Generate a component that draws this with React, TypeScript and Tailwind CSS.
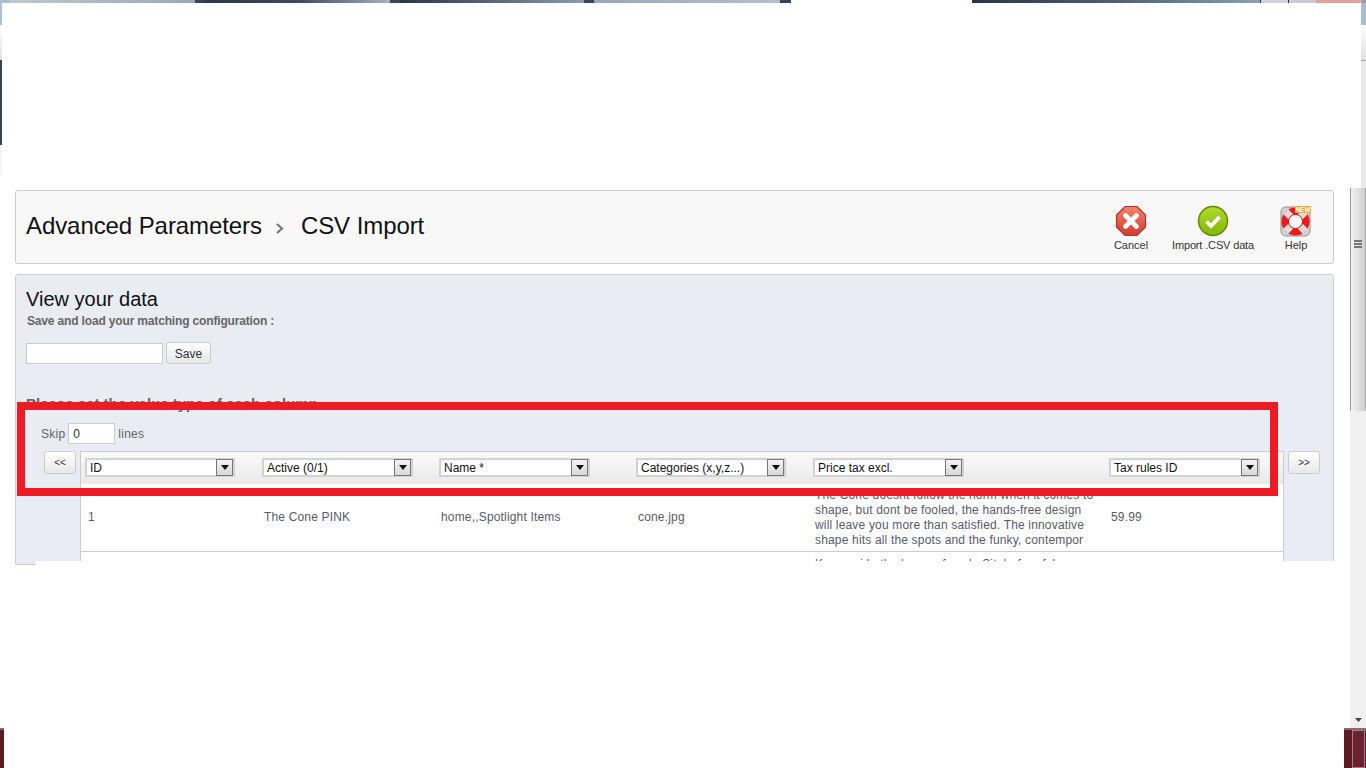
const selects = [
  { label: 'ID', width: 'w-[150px]' },
  { label: 'Active (0/1)', width: 'w-[151px]' },
  { label: 'Name *', width: 'w-[151px]' },
  { label: 'Categories (x,y,z...)', width: 'w-[150px]' },
  { label: 'Price tax excl.', width: 'w-[151px]' },
  { label: 'Tax rules ID', width: 'w-[151px]' },
];

const firstRow = ['1', 'The Cone PINK', 'home,,Spotlight Items', 'cone.jpg'];

const description = [
  'The Cone doesnt follow the norm when it comes to',
  'shape, but dont be fooled, the hands-free design',
  'will leave you more than satisfied. The innovative',
  'shape hits all the spots and the funky, contempor',
];

const columns = 'grid grid-cols-[177px_177px_197px_177px_296px_178px]';

const CancelIcon = () => (
  <svg width="32" height="32" viewBox="0 0 32 32">
    <defs>
      <linearGradient id="cancelFill" x1="0" y1="0" x2="0" y2="1">
        <stop offset="0" stopColor="#f4826c" />
        <stop offset="1" stopColor="#d63a2a" />
      </linearGradient>
    </defs>
    <path d="M10 1.5h12l8.500 8.500v12l-8.500 8.500h-12l-8.500-8.500v-12z" fill="url(#cancelFill)" stroke="#a8392c" strokeWidth="1.200" />
    <path d="M10.500 10.500l11 11M21.500 10.500l-11 11" stroke="#fff" strokeWidth="4.800" strokeLinecap="round" />
  </svg>
);

const ImportIcon = () => (
  <svg width="32" height="32" viewBox="0 0 32 32">
    <defs>
      <linearGradient id="importFill" x1="0" y1="0" x2="0" y2="1">
        <stop offset="0" stopColor="#b2d832" />
        <stop offset="1" stopColor="#82b800" />
      </linearGradient>
    </defs>
    <circle cx="16" cy="16" r="14.500" fill="url(#importFill)" stroke="#5f8a08" strokeWidth="1.400" />
    <path d="M9.500 16.500l4.500 4.500 8.500-9" fill="none" stroke="#fff" strokeWidth="3.800" />
  </svg>
);

const HelpIcon = () => (
  <svg width="34" height="32" viewBox="0 0 34 32">
    <rect x="2" y="2" width="29" height="29" rx="5" fill="#d4d4d4" stroke="#8f8f8f" />
    <circle cx="16.500" cy="16.500" r="14" fill="#f01818" />
    <path d="M6.500 6.500l6 6M26.500 6.500l-6 6M6.500 26.500l6-6M26.500 26.500l-6-6" stroke="#dcdcdc" strokeWidth="7" />
    <circle cx="16.500" cy="16.500" r="7" fill="#fff" stroke="#b01414" />
    <rect x="16" y="1" width="16" height="7" rx="1" fill="#f5a623" />
    <text x="24" y="7" textAnchor="middle" fontSize="6.500" fontWeight="700" fill="#fff" fontFamily="Liberation Sans, sans-serif">NEW</text>
  </svg>
);

const FakeSelect = ({ label, width }: { label: string; width: string }) => (
  <div className={`${width} h-[19px] flex items-center justify-between bg-white border-2 border-[#d2d2d2] text-xs text-[#111] pl-[3px]`}>
    <span>{label}</span>
    <span className="w-[17px] h-[17px] flex items-center justify-center border border-[#777] bg-gradient-to-b from-[#f4f4f4] to-[#d8d8d8]">
      <svg width="8" height="5" viewBox="0 0 8 5">
        <path d="M0 0h8l-4 5z" fill="#111" />
      </svg>
    </span>
  </div>
);

const ScrollButton = ({ label }: { label: string }) => (
  <button className="w-8 h-[23px] shrink-0 border border-[#ccc] rounded-[3px] bg-gradient-to-b from-white to-[#e8e8e8] text-[10px] leading-[16px] text-[#333]">
    {label}
  </button>
);

const App = () => {
  return (
    <div className="relative w-[1366px] h-[768px] overflow-hidden flex flex-col bg-white font-['Liberation_Sans',Arial,sans-serif]">
      {/* window title bar behind the cut-out */}
      <div className="h-[3px] shrink-0 flex bg-[#3a4558]">
        <div className="w-[10px] bg-[#a9bdd2]" />
        <div className="w-[185px] bg-gradient-to-r from-[#c0c8d0] to-[#98a8bc]" />
        <div className="w-[10px]" />
        <div className="w-[185px] bg-gradient-to-r from-[#2d3648] via-[#3f4a5e] to-[#a8b4c4]" />
        <div className="w-[10px]" />
        <div className="w-[184px] bg-gradient-to-r from-[#2d3648] to-[#8d9cb0]" />
        <div className="w-[10px]" />
        <div className="w-[186px] bg-gradient-to-r from-[#98a8bc] to-[#b4c0cc]" />
        <div className="w-[11px]" />
        <div className="w-[181px] bg-white" />
        <div className="w-[288px] bg-gradient-to-r from-[#2b3347] via-[#4f6078] to-[#8ba0b8]" />
        <div className="w-[28px] bg-[#cfd2da] border-l border-[#333]" />
        <div className="w-[28px] bg-[#c9ccd6] border-l border-[#333]" />
        <div className="w-[46px] bg-[#eb9f96]" />
        <div className="flex-1 bg-[#8ba0b8]" />
      </div>

      <div className="h-[725px] shrink-0 flex">
        {/* sliver of the browser on the left */}
        <div className="w-[2px] h-[172px] shrink-0 flex flex-col">
          <div className="h-[22px] bg-[#a9c0d8]" />
          <div className="h-[35px] bg-gradient-to-b from-white to-[#e0e0e0]" />
          <div className="h-[85px] bg-[#3a4250]" />
          <div className="h-[30px] bg-[#f4f4f4]" />
        </div>

        <div className="w-[1348px] shrink-0 pl-[13px] pr-[16px] pt-[187px]">
          <div className="h-[74px] flex items-center justify-between bg-[#f8f8f8] border border-[#ccc] rounded-[3px] pl-[10px]">
            <div className="flex items-center text-2xl tracking-[-0.08px] text-[#111] pb-[3px]">
              <span>Advanced Parameters</span>
              <svg className="ml-[14px] mr-[17px] mt-[5px]" width="8" height="11" viewBox="0 0 8 11">
                <path d="M1 1l5 4.500-5 4.500" fill="none" stroke="#777" strokeWidth="2.200" />
              </svg>
              <span>CSV Import</span>
            </div>
            <div className="flex text-[11px] text-[#333] h-full pt-[14px]">
              <div className="w-[34px] flex flex-col items-center mr-[24px]">
                <CancelIcon />
                <span className="whitespace-nowrap">Cancel</span>
              </div>
              <div className="w-[82px] flex flex-col items-center mr-[25px]">
                <ImportIcon />
                <span className="whitespace-nowrap tracking-[-0.15px]">Import .CSV data</span>
              </div>
              <div className="w-[34px] flex flex-col items-center mr-[20px]">
                <HelpIcon />
                <span className="whitespace-nowrap">Help</span>
              </div>
            </div>
          </div>

          <div className="h-[291px] mt-[10px] overflow-hidden bg-[#e9ecf3] border border-[#ccced7] rounded-t-[3px] pl-[10px]">
            <h2 className="mt-[13px] text-xl leading-[22px] text-[#111]">View your data</h2>
            <p className="mt-[4px] pl-[1px] text-xs leading-[14px] font-bold tracking-[-0.16px] text-[#666]">Save and load your matching configuration :</p>
            <div className="mt-[14px] flex items-start gap-[3px]">
              <div className="w-[137px] h-[21px] mt-[1px] bg-white border border-[#ccc]" />
              <button className="w-[45px] h-[22px] pt-[1px] border border-[#ccc] rounded-[3px] bg-gradient-to-b from-white to-[#e6e6e6] text-xs text-[#333]">
                Save
              </button>
            </div>
            <p className="mt-[32px] text-[15px] leading-4 font-bold text-[#666]">Please set the value type of each column</p>

            <div className="mt-[11px] ml-[15px] flex items-center text-xs tracking-[0.25px] text-[#666]">
              <span>Skip</span>
              <div className="w-[47px] h-[21px] ml-[3px] mr-[3px] pl-[4px] leading-[20px] bg-white border border-[#ccc] text-[#333]">0</div>
              <span>lines</span>
            </div>

            <div className="mt-[7px] ml-[18px] flex items-start gap-[4px]">
              <ScrollButton label="<<" />
              <div className="w-[1204px] border border-[#ccc] border-b-0 bg-white">
                <div className={`${columns} h-[32px] items-center bg-gradient-to-b from-[#fafafa] to-[#e9e9e9]`}>
                  {selects.map((select) => (
                    <div key={select.label} className="pl-[4px] pb-[1px]">
                      <FakeSelect label={select.label} width={select.width} />
                    </div>
                  ))}
                </div>
                <div className={`${columns} h-[68px] items-center border-b border-[#ccc] text-xs leading-[15px] tracking-[0.17px] text-[#585a69]`}>
                  {firstRow.map((cell) => (
                    <div key={cell} className="pl-[6px] first:pl-[7px]">{cell}</div>
                  ))}
                  <div className="pl-[6px] whitespace-nowrap">
                    {description.map((line) => (
                      <div key={line}>{line}</div>
                    ))}
                  </div>
                  <div className="pl-[6px]">59.99</div>
                </div>
                <div className={`${columns} text-xs leading-[15px] tracking-[0.17px] text-[#585a69] pt-[5px]`}>
                  <div className="col-start-5 pl-[6px] whitespace-nowrap">Keep aside the hours of work. Sit, before ful</div>
                </div>
              </div>
              <ScrollButton label=">>" />
            </div>
          </div>
        </div>

        <div className="w-[16px] shrink-0 flex flex-col">
          <div className="h-[185px] flex">
            <div className="w-[11px] bg-white" />
            <div className="w-[5px] flex flex-col">
              <div className="h-[22px] bg-[#a9bdd2]" />
              <div className="h-[35px] bg-gradient-to-b from-white to-[#e0e0e0]" />
              <div className="flex-1 bg-[#e8e8e8] border-t border-[#aaa]" />
            </div>
          </div>
          <div className="h-[223px] flex items-start justify-center pt-[52px] border-l border-[#999] border-r-[1px] border-r-[#aaa] bg-gradient-to-r from-[#f2f2f2] via-[#e0e0e0] to-[#cfcfcf]">
            <div className="w-[8px] h-[8px] flex flex-col justify-between">
              <div className="h-[2px] bg-[#777]" />
              <div className="h-[2px] bg-[#777]" />
              <div className="h-[2px] bg-[#777]" />
            </div>
          </div>
          <div className="flex-1 flex flex-col items-center justify-end pb-[6px] bg-[#f0f0f0]">
            <svg width="7" height="4" viewBox="0 0 7 4">
              <path d="M0 0h7l-3.500 4z" fill="#444" />
            </svg>
          </div>
        </div>
      </div>

      {/* taskbar ends left by the cut-out */}
      <div className="h-[40px] shrink-0 flex">
        <div className="w-[4px] border-t-2 border-t-[#8a6a72] bg-[#5c1a24]" />
        <div className="flex-1 bg-white" />
        <div className="w-[22px] flex border-t-2 border-t-[#8a6a72] bg-[#5c1a24] pl-[8px]">
          <div className="w-[13px] border border-[#a08088] bg-[#6a2430]" />
        </div>
      </div>

      {/* cut-out over the table, the panel ends in it */}
      <div className="absolute left-[36px] top-[561px] w-[1314px] h-[8px] bg-white" />

      {/* red marker drawn on the screenshot */}
      <div className="absolute left-[17px] top-[402px] w-[1261px] h-[94px] border-8 border-[#ed1c24]" />
    </div>
  );
};

export default App;
